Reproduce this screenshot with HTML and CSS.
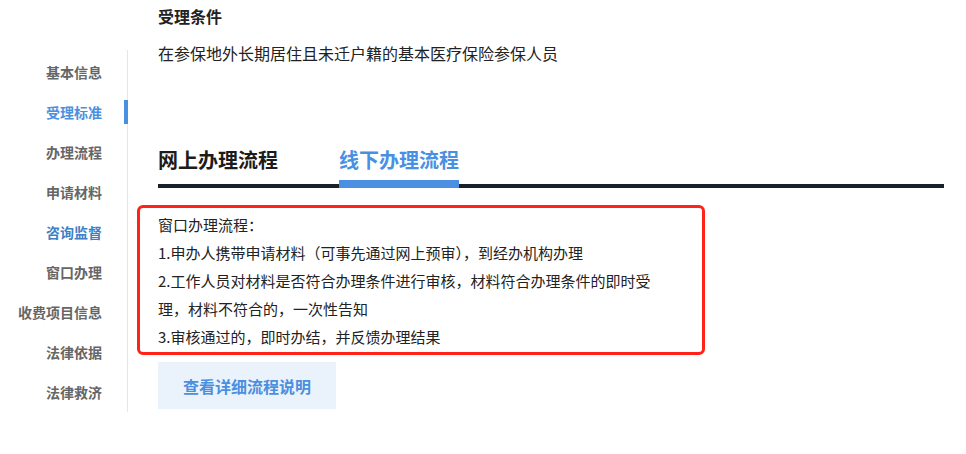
FILE: index.html
```html
<!DOCTYPE html>
<html lang="zh-CN">
<head>
  <meta charset="UTF-8">
  <meta name="viewport" content="width=device-width, initial-scale=1.0">
  <title>受理标准</title>
  <link rel="stylesheet" href="styles.css">
</head>
<body>
  <div class="page">
    <ul class="side-nav">
      <li>基本信息</li>
      <li class="active">受理标准</li>
      <li>办理流程</li>
      <li>申请材料</li>
      <li class="visited">咨询监督</li>
      <li>窗口办理</li>
      <li>收费项目信息</li>
      <li>法律依据</li>
      <li>法律救济</li>
    </ul>

    <div class="main">
      <h3 class="section-title">受理条件</h3>
      <p class="section-text">在参保地外长期居住且未迁户籍的基本医疗保险参保人员</p>

      <div class="tabs">
        <div class="tab">网上办理流程</div>
        <div class="tab current">线下办理流程</div>
      </div>

      <div class="flow-box">
        <p>窗口办理流程：</p>
        <p>1.申办人携带申请材料（可事先通过网上预审），到经办机构办理</p>
        <p>2.工作人员对材料是否符合办理条件进行审核，材料符合办理条件的即时受理，材料不符合的，一次性告知</p>
        <p>3.审核通过的，即时办结，并反馈办理结果</p>
      </div>

      <button type="button" class="detail-btn">查看详细流程说明</button>
    </div>
  </div>
</body>
</html>
```

FILE: styles.css
```css
body {
  margin: 0;
  background: #fff;
  font-family: "Microsoft YaHei", "Noto Sans CJK SC", "Liberation Sans", sans-serif;
  color: #222;
}

.page {
  display: flex;
  align-items: flex-start;
}

.side-nav {
  list-style: none;
  margin: 50px 0 0;
  padding: 2px 25px 0 0;
  width: 102px;
  border-right: 1px solid #e6e6e6;
}

.side-nav li {
  position: relative;
  height: 40px;
  line-height: 40px;
  text-align: right;
  font-size: 14px;
  font-weight: bold;
  color: #666;
}

.side-nav li.active {
  color: #4a90e2;
}

.side-nav li.active::after {
  content: "";
  position: absolute;
  right: -26px;
  top: 8px;
  width: 4px;
  height: 24px;
  background: #4a90e2;
}

.side-nav li.visited {
  color: #3f80c4;
}

.main {
  flex: 1;
  margin: 0 22px 0 30px;
  padding-top: 5px;
}

.section-title {
  margin: 0;
  font-size: 16px;
  line-height: 22px;
  font-weight: bold;
  color: #222;
}

.section-text {
  margin: 15px 0 0;
  font-size: 16px;
  line-height: 22px;
  color: #222;
}

.tabs {
  display: flex;
  gap: 61px;
  margin-top: 82px;
  border-bottom: 4px solid #17202b;
}

.tab {
  position: relative;
  font-size: 20px;
  line-height: 28px;
  font-weight: bold;
  color: #1c1c1c;
  padding-bottom: 10px;
}

.tab.current {
  color: #4a90e2;
}

.tab.current::after {
  content: "";
  position: absolute;
  left: 0;
  right: 0;
  bottom: -4px;
  height: 8px;
  background: #4a90e2;
}

.flow-box {
  width: 568px;
  box-sizing: border-box;
  margin: 17px 0 0 -21px;
  padding: 3px 44px 1px 18px;
  border: 3px solid #ff2218;
  border-radius: 6px;
}

.flow-box p {
  margin: 0;
  font-size: 15px;
  line-height: 28px;
  color: #222;
}

.detail-btn {
  display: block;
  margin-top: 7px;
  width: 178px;
  height: 47px;
  border: none;
  background: #eaf3fc;
  color: #4a8fe0;
  font-family: inherit;
  font-size: 16px;
  font-weight: bold;
  cursor: pointer;
}
```
